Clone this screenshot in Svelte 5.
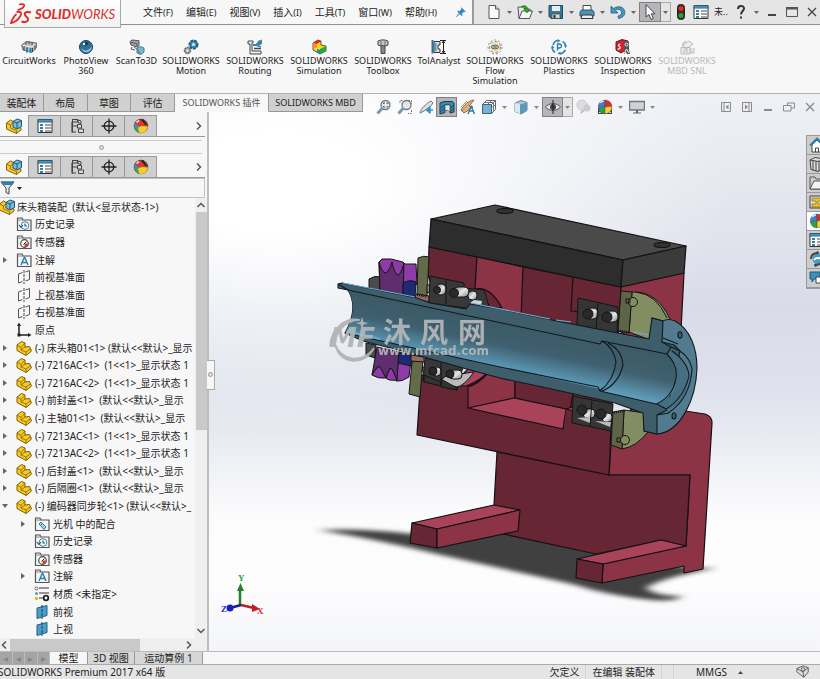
<script>
  const menus = [
    ['文件', 'F'], ['编辑', 'E'], ['视图', 'V'], ['插入', 'I'], ['工具', 'T'], ['窗口', 'W'], ['帮助', 'H']
  ];
  const quick = [
    ['new', '新建'], ['open', '打开'], ['save', '保存'], ['print', '打印'], ['undo', '撤消']
  ];
  const addins = [
    { icon: 'circuit', lines: ['CircuitWorks'], size: 'wide' },
    { icon: 'sphere', lines: ['PhotoView', '360'], size: 'mid' },
    { icon: 'scan', lines: ['ScanTo3D'], size: 'narrow' },
    { icon: 'motion', lines: ['SOLIDWORKS', 'Motion'] },
    { icon: 'routing', lines: ['SOLIDWORKS', 'Routing'] },
    { icon: 'simulation', lines: ['SOLIDWORKS', 'Simulation'] },
    { icon: 'bolt', lines: ['SOLIDWORKS', 'Toolbox'] },
    { icon: 'tol', lines: ['TolAnalyst'], size: 'short' },
    { icon: 'flow', lines: ['SOLIDWORKS', 'Flow', 'Simulation'] },
    { icon: 'plastics', lines: ['SOLIDWORKS', 'Plastics'] },
    { icon: 'inspection', lines: ['SOLIDWORKS', 'Inspection'] },
    { icon: 'mbd', lines: ['SOLIDWORKS', 'MBD SNL'], off: true }
  ];
  const tabs = ['装配体', '布局', '草图', '评估', 'SOLIDWORKS 插件', 'SOLIDWORKS MBD'];
  const managers = [
    ['assembly', '设计树'], ['props', '属性'], ['config', '配置'], ['target', '尺寸'], ['ball', '外观']
  ];
  const tree = [
    { icon: 'assembly', text: '床头箱装配  (默认<显示状态-1>)', level: 0 },
    { icon: 'history', text: '历史记录', level: 1 },
    { icon: 'sensor', text: '传感器', level: 1 },
    { icon: 'note', text: '注解', level: 1, arrow: 'right' },
    { icon: 'plane', text: '前视基准面', level: 1 },
    { icon: 'plane', text: '上视基准面', level: 1 },
    { icon: 'plane', text: '右视基准面', level: 1 },
    { icon: 'origin', text: '原点', level: 1 },
    { icon: 'part', text: '(-) 床头箱01<1> (默认<<默认>_显示', level: 1, arrow: 'right' },
    { icon: 'part', text: '(-) 7216AC<1>  (1<<1>_显示状态 1', level: 1, arrow: 'right' },
    { icon: 'part', text: '(-) 7216AC<2>  (1<<1>_显示状态 1', level: 1, arrow: 'right' },
    { icon: 'part', text: '(-) 前封盖<1>  (默认<<默认>_显示', level: 1, arrow: 'right' },
    { icon: 'part', text: '(-) 主轴01<1>  (默认<<默认>_显示', level: 1, arrow: 'right' },
    { icon: 'part', text: '(-) 7213AC<1>  (1<<1>_显示状态 1', level: 1, arrow: 'right' },
    { icon: 'part', text: '(-) 7213AC<2>  (1<<1>_显示状态 1', level: 1, arrow: 'right' },
    { icon: 'part', text: '(-) 后封盖<1>  (默认<<默认>_显示', level: 1, arrow: 'right' },
    { icon: 'part', text: '(-) 后隔圈<1>  (默认<<默认>_显示', level: 1, arrow: 'right' },
    { icon: 'part', text: '(-) 编码器同步轮<1> (默认<<默认>_', level: 1, arrow: 'down' },
    { icon: 'mates', text: '光机 中的配合', level: 2, arrow: 'right' },
    { icon: 'history', text: '历史记录', level: 2 },
    { icon: 'sensor', text: '传感器', level: 2 },
    { icon: 'note', text: '注解', level: 2, arrow: 'right' },
    { icon: 'material', text: '材质 <未指定>', level: 2 },
    { icon: 'planeblue', text: '前视', level: 2 },
    { icon: 'planeblue', text: '上视', level: 2 }
  ];
  const pane = [
    ['home', '资源'], ['library', '设计库'], ['folder', '文件探索器'], ['palette', '视图调色板'],
    ['ball', '外观'], ['props', '自定义属性'], ['refresh', '刷新'], ['forum', '论坛']
  ];
</script>

{#snippet caret()}
  <svg class="caret" viewBox="0 0 5 3" aria-hidden="true"><path d="M0 0h5L2.500 3z" fill="currentColor" /></svg>
{/snippet}

{#snippet chevron(turn)}
  <svg class="chev {turn}" viewBox="0 0 8 8" aria-hidden="true"><path d="M2 0.500 5.500 4 2 7.500" fill="none" stroke="#555" stroke-width="1.500" /></svg>
{/snippet}

{#snippet icon(name)}
  <svg class="icon" viewBox="0 0 16 16" fill="none" stroke-linejoin="round" aria-hidden="true">
    {#if name === 'new'}
      <path d="M3 1.500h6.500L13 5v9.500H3z" fill="#fbfbfb" stroke="#555" /><path d="M9.500 1.500V5H13" stroke="#555" fill="#ddd" />
    {:else if name === 'open'}
      <path d="M1 3h5l1 1.500h4V7h4l-3 7.500H2z" fill="#e8e8e8" stroke="#555" /><path d="M2 14.500 5 7h10.500l-3 7.500z" fill="#f6f6f6" stroke="#555" /><path d="M4 3c3-2.500 6-1.500 7 2h2.500L10 9 6.800 5H9C8 3 6.500 2.500 4 3z" fill="#35a524" stroke="#1c6e13" stroke-width=".5" />
    {:else if name === 'save'}
      <path d="M1 1.500h13.500v13H3l-2-2z" fill="#38789c" stroke="#1d4963" /><path d="M4 2h8v5H4z" fill="#e8edf0" /><path d="M4 10h8v4.500H4z" fill="#d4d4d4" stroke="#333" stroke-width=".6" /><path d="M5.500 11h2v3h-2z" fill="#333" />
    {:else if name === 'print'}
      <path d="M4 1.500h8V7H4z" fill="#fff" stroke="#444" /><path d="M2.500 6h11L15 8v4H1V8z" fill="#4d93b8" stroke="#245872" /><path d="M3 11h10l1 3.500H2z" fill="#eee" stroke="#333" />
    {:else if name === 'undo'}
      <path d="M1 2v7h7L5.500 6.500C8 4.500 11.500 5.500 11.500 8.500c0 2-1.500 3-3.500 3.500l.5 2.500C12 14 14.800 12 14.800 8.500 14.800 3 8.500 1 3.500 4.500z" fill="#4a93bd" stroke="#1f5e83" stroke-width=".8" />
    {:else if name === 'cursor'}
      <path d="M4 0.500v12.500l3-2.500 2 5 2.300-1-2-4.700H13z" fill="#fff" stroke="#444" />
    {:else if name === 'traffic'}
      <rect x="4.500" y=".5" width="7" height="15" rx="3" fill="#3b2b22" stroke="#222" /><circle cx="8" cy="4.500" r="2.500" fill="#ec2a1d" /><circle cx="8" cy="11.500" r="2.500" fill="#25a33c" />
    {:else if name === 'props'}
      <path d="M1 1.500h14v13H1z" fill="#fff" stroke="#333" /><path d="M1 1.500h14v2.700H1z" fill="#4b93b5" stroke="#245872" stroke-width=".6" /><path d="M3 6h3v2H3zM3 9h3v2H3zM3 12h3v2H3z" fill="#387fa6" /><path d="M8 7h6M8 10h6M8 13h6" stroke="#444" />
    {:else if name === 'help'}
      <path d="M5 5c0-4 6-4 6-.5C11 7 8 7 8 10.500" stroke="#333" stroke-width="2" /><path d="M7 12.500h2v2H7z" fill="#333" />
    {:else if name === 'min'}
      <path d="M4 10h8v2H4z" fill="currentColor" />
    {:else if name === 'max'}
      <path d="M2.500 3.500h11v9h-11z" stroke="#555" /><path d="M2 3h12v2.500H2z" fill="#555" />
    {:else if name === 'close'}
      <path d="m4 4 8 8m0-8-8 8" stroke="currentColor" stroke-width="1.300" />
    {:else if name === 'restore'}
      <path d="M6.500 6V4h7v5H10M2.500 6.500h7.500V12H2.500z" stroke="currentColor" />
    {:else if name === 'paneleft'}
      <path d="M3.500 3.500h9v9h-9zM6 3.500v9" stroke="currentColor" /><path d="M10.500 5.500v5L7.500 8z" fill="currentColor" />
    {:else if name === 'paneright'}
      <path d="M3.500 3.500h9v9h-9zM10 3.500v9" stroke="currentColor" /><path d="M6 5.500v5L9 8z" fill="currentColor" />
    {:else if name === 'pin'}
      <path d="m8.500 3 4.500 4.500-2 .3-2 2 .2 2.700-2.400-2.400L2.500 13.500 6 9.300 3.700 7l2.700.1 2-2z" fill="#2e86c1" stroke="#2e86c1" stroke-width=".6" />
    {:else if name === 'circuit'}
      <path d="m.5 6 5-3.500 10 1.500v4.500l-4 4.500L2 11z" fill="#b7bcbf" stroke="#555" stroke-width=".8" /><path d="m2 6.500 9 1.500 3-3" stroke="#eee" /><path d="M6 8.500v5M9.500 9v5" stroke="#2d7fae" stroke-width="2" /><path d="M5 2.500v3M8 2v3M11 3v3M3 7v4.500M11.500 9v4M14 6.500v4" stroke="#444" />
    {:else if name === 'sphere'}
      <circle cx="8" cy="8" r="6.500" fill="#2f7297" stroke="#163f57" /><path d="M3 9c3 4 8 3 11-2-.5 7-8.500 9-11 2z" fill="#8cc3de" /><path d="M4 6c1-3 5-4 7-2-2 3-5 4-7 2z" fill="#173c52" /><circle cx="6" cy="5" r="1.200" fill="#fff" />
    {:else if name === 'scan'}
      <path d="m1 2.500 2-1.500 7 .7v4.800L8 8 2 6z" fill="#a3a7aa" stroke="#555" /><path d="m2 3.500 6 1v3M3 8l-1 2 4 1" stroke="#555" /><path d="m8 9 3.500-1.500L15 9v4l-3 2.500L8 14z" fill="#7db6d0" stroke="#477e98" /><path d="m5 8 4 3 2 4" stroke="#666" />
    {:else if name === 'motion'}
      <circle cx="10.500" cy="5.500" r="4" fill="#418cb4" stroke="#245f80" stroke-width="2" stroke-dasharray="3 .8" /><circle cx="10.500" cy="5.500" r="1.500" fill="#dcecf4" /><circle cx="4.500" cy="11.500" r="3" fill="#aaa" stroke="#666" stroke-width="1.500" stroke-dasharray="2 .6" /><circle cx="4.500" cy="11.500" r="1" fill="#fff" />
    {:else if name === 'routing'}
      <path d="M1 2h5v2H5v8h9v3H3V5H1z" fill="#eee" stroke="#444" /><path d="M7 9.500h7" stroke="#444" stroke-width="1.500" /><path d="m11 2 4-1.500V5l-4 2z" fill="#3984ab" /><path d="M6 6h3l4-4M9 6l5 2" stroke="#3984ab" stroke-width="1.800" />
    {:else if name === 'simulation'}
      <path d="m2 4 5-3 3 1v4l5 1v5l-6 3-7-4z" fill="#f6d51f" stroke="#333" stroke-width=".8" /><path d="m2 4 5-3 3 1-4 3z" fill="#e8201a" /><path d="m2 4 4 2v3L2 8z" fill="#f18a1c" /><path d="m9 10 6-3v5l-6 3z" fill="#27a745" /><path d="m6 10 3 1v4l-3-2z" fill="#1b86c8" />
    {:else if name === 'bolt'}
      <path d="M3 2c3-1.500 7-1.500 10 0v4l-3 1H6L3 6z" fill="#c6c6c6" stroke="#444" /><path d="M6 7h4v7.500H6z" fill="#aaa" stroke="#444" /><path d="M6 9h4M6 11h4M6 13h4M6 2v4M10 2v4" stroke="#555" stroke-width=".8" />
    {:else if name === 'tol'}
      <path d="M1.500 1v13.500" stroke="#286f96" stroke-width="2" /><path d="M3 2.500h6V6H7v4h2v3.500H3z" fill="#ddd" stroke="#333" /><path d="M3.500 4v8h2V4z" fill="#4e9bc3" /><path d="M9 1.500h6M9 14.500h6M12.500 2v12M11 4l1.500-2L14 4M11 12l1.500 2 1.500-2" stroke="#222" />
    {:else if name === 'flow'}
      <circle cx="8" cy="8" r="7" stroke="#35a8e0" stroke-dasharray="2 2" /><circle cx="8" cy="8" r="5.500" stroke="#ef5b28" stroke-dasharray="3 2" /><circle cx="8" cy="8" r="4" stroke="#e3d73b" stroke-dasharray="3 1" /><ellipse cx="8" cy="8" rx="3.500" ry="2" fill="#ccc" stroke="#555" /><path d="M6.500 8h3" stroke="#555" />
    {:else if name === 'plastics'}
      <path d="M2 6C3 3 5 1.500 7 1.500M11.500 2.500C13.500 3.500 14.500 5 14.800 7M14.500 11c-1.500 2.500-3.500 3.500-5.500 3.700M4 13.500C2 12 1.200 10.500 1.200 8.500" stroke="#3387b5" stroke-width="1.600" /><path d="m6.500 0 3 1.800-3 2zM13 6l3 .5-1.500 3zM9.500 12.500v3.500L6.500 14.500zM0 9.500l1-3.500 2.500 3z" fill="#3387b5" /><path d="M6.500 11.500V5h2q2 .3 2 2t-2 2h-2" stroke="#2677a3" stroke-width="1.300" />
    {:else if name === 'inspection'}
      <path d="m1 3 6-2.500 6 1.500v8l-7 4-5-3z" fill="#c92531" stroke="#701820" /><path d="M5.500 5C3 5 3 7 4.500 7.500S5 10.500 2.500 10" stroke="#fff" stroke-width="1.200" /><path d="M9 3h5v8l1 4h-3l-1-2-2 2z" fill="#555" /><circle cx="11.500" cy="5.500" r="1.500" stroke="#eee" /><path d="m9.500 14 2-4 2.500 4" stroke="#eee" />
    {:else if name === 'mbd'}
      <path d="m3 6 7-4 4 3-7 5zM4 7V4l3-2M2 8.500h9V15H2zM12 9v5h3V9" fill="#ececec" stroke="#bbb" /><path d="M4 11h5M4 13h5" stroke="#bbb" />
    {:else if name === 'zoomfit' || name === 'zoomarea'}
      {#if name === 'zoomarea'}<path d="M3 4V1.500h3M11 1.500h3.500V5M14.500 11v3.500H11" stroke="#777" stroke-dasharray="2 1" />{/if}
      <circle cx="9.500" cy="6" r="4.500" fill="#dfe8ed" stroke="#777" stroke-width="1.300" /><path d="m1.500 14.500 4.500-5" stroke="#6d9cb6" stroke-width="3" />
      {#if name === 'zoomfit'}<path d="M7.500 5V4H9M10.500 4H12v1M12 7v1h-1.500M9 8H7.500V7" stroke="#555" />{/if}
    {:else if name === 'previous'}
      <path d="M2 14c0-4 7-10 11-12l2 2c-2 4-7 6-9 8z" fill="#dce0e3" stroke="#777" /><path d="m15 11H9m3-3-3.500 3 3.500 3z" fill="#3b92c2" stroke="#3b92c2" stroke-width="1.500" />
    {:else if name === 'section'}
      <path d="m1 4 4-1.500h8l2 1.500v9l-4 1V6H6v7.500L1 15z" fill="#358bb5" stroke="#173f55" /><path d="M6 6h5v7l-2-1.500H6z" fill="#e4e4e4" stroke="#444" stroke-width=".6" /><path d="m2 9 3.500-3M2 12.500 5.500 9M11.500 9 15 6m-3.500 6.500L15 9" stroke="#173f55" />
    {:else if name === 'annotate'}
      <path d="M1 11C4 6 8 2 14 1L9 7l4 1-9 6z" fill="#e9b06b" stroke="#8b6a40" /><path d="m2 12 7-7M1 8l6-6" stroke="#999" /><path d="m8 15 3.200-8 3.200 8m-5.200-3h4" stroke="#2d7ba8" stroke-width="1.400" />
    {:else if name === 'orient'}
      <path d="M1.500 5.500h9v9h-9z" fill="#79b1ce" stroke="#336985" /><path d="m1.500 5.500 4-4h9v9l-4 4M10.500 5.500l4-4" stroke="#666" /><path d="M10 9l4-3M7 5l3-3M4 3.500h9M12.500 4v9" stroke="#777" />
    {:else if name === 'display'}
      <path d="m2 4 6-2.500 6 2v8L8 15l-6-2.500z" fill="#a5cadc" stroke="#6b8490" /><path d="m2 4 5 1.500V15l-5-2.500z" fill="#d9e9f1" /><path d="m7 5.500 7-2v8L7 15z" fill="#5a9bbb" />
    {:else if name === 'eye'}
      <path d="M0.500 8C4 3.500 12 3.500 15.500 8 12 12.500 4 12.500 .5 8z" fill="#e4e4e4" stroke="#555" /><circle cx="8" cy="8" r="3" fill="#444" /><path d="M8 1v14" stroke="#222" />
    {:else if name === 'ghost'}
      <circle cx="6" cy="6" r="5" fill="#ddd" stroke="#ccc" /><circle cx="11" cy="9" r="3.500" fill="#ccc" /><path d="m4 13 5-4 1 2-5 4z" fill="#c4c4c4" />
    {:else if name === 'ball' || name === 'scene'}
      {#if name === 'scene'}<path d="M1 9h14v6H1z" fill="#444" /><path d="M2 10h2v2H2zM2 13h2v1H2zM12 10h2v2h-2zM12 13h2v1h-2z" fill="#ddd" />{/if}
      <g stroke="#444" stroke-width=".4"><path d="M8 8V1a6.800 6.800 0 0 0-6.600 8z" fill="#3d7fd0" /><path d="M8 8V1a6.800 6.800 0 0 1 7 6.500z" fill="#dd2d27" /><path d="m8 8-6.600 1A6.800 6.800 0 0 0 8 14.800z" fill="#2ba343" /><path d="m8 8 7-.5A6.800 6.800 0 0 1 8 14.800z" fill="#f2d132" /></g><path d="M3.500 4c1-1.500 2.500-2 3.500-2" stroke="#fff" stroke-width="1.200" />
    {:else if name === 'appearance'}
      <circle cx="8" cy="8" r="6.800" fill="#dd3a2c" stroke="#333" stroke-width=".8" /><path d="M8 8C4 8 2 6 2.500 4.200A7 7 0 0 0 2 11z" fill="#4e86c9" /><path d="M1.300 7.500C4 10 6 9 8 8v6.800A6.800 6.800 0 0 1 1.300 7.500z" fill="#3aa54b" /><path d="M5 9.500 9 8l6 .5A6.800 6.800 0 0 1 6 14.500z" fill="#f1cf2c" /><path d="m8 2 2-1 4 5.500-1 1z" fill="#222" /><path d="M3.500 4.500 6 2.500" stroke="#fff" stroke-width="1.500" />
    {:else if name === 'monitor'}
      <path d="M.5 2.500h15v8.500H.5z" fill="#c9d4da" stroke="#777" stroke-width="1.400" /><path d="M7 11h2v2.500h3v1H4v-1h3z" fill="#666" />
    {:else if name === 'config'}
      <path d="M3 1.500h5.500V4H3v10h4M3 8h5" stroke="#444" stroke-width="1.200" /><path d="M3.500 1.500v13M8.500 6.500h4v3.500h-4zM9.500 11h5v3.500h-5zM9 2l3 1v2.500l-3-1z" fill="#ddd" stroke="#444" />
    {:else if name === 'target'}
      <circle cx="8" cy="8" r="4.800" stroke="#222" stroke-width="1.300" /><path d="M8 .5v15M.5 8h15" stroke="#222" stroke-width="1.300" />
    {:else if name === 'assembly'}
      <path d="m.5 5 4-3L8 4v4l7 2v2l-4.500 3.500L.5 11z" fill="#f7c829" stroke="#81600b" /><path d="m.5 5 4 2V10l6 2.500v3M4.500 7 8 4" stroke="#81600b" stroke-width=".8" /><path d="m7 3.500 4-2.500 4.500 1.500V8.500L11 11 7 9z" fill="#79bbdb" stroke="#1f5876" /><path d="m7 3.500 4 1.500 4.500-2.500M11 5v6" stroke="#1f5876" />
    {:else if name === 'part'}
      <path d="m1 5 4.500-3.500L9 3v4l4.500-.5L15.500 11 10 15.500 1 10.500z" fill="#fbcb22" stroke="#765b09" /><path d="m1 5 4 2.500L9 3M5 7.500V10l5 2 5-3.500M10 12v3.500M5 10l4-3" stroke="#8b6b0c" stroke-width=".9" />
    {:else if ['history', 'sensor', 'note', 'mates'].includes(name)}
      <path d="M1.500 2h4.500l1 2h8v10.500H1.500z" fill="#f4f4f4" stroke="#555" stroke-width="1.200" /><path d="M1.500 4H7" stroke="#888" />
      {#if name === 'history'}<circle cx="9" cy="9.500" r="3.800" fill="#fff" stroke="#3b7f9f" /><path d="M9 7.500v2.500h2M3 9l2 2.500L7 9" stroke="#1d5979" stroke-width="1.200" />
      {:else if name === 'sensor'}<circle cx="8.500" cy="9.500" r="3.800" fill="#fff" stroke="#444" stroke-width="1.200" /><path d="M8.500 9.500h3.500A3.500 3.500 0 0 1 8.500 13z" fill="#d43c28" /><path d="m7.500 10.500 3-3" stroke="#222" />
      {:else if name === 'note'}<path d="m5 13 3.500-8 3.500 8M6.500 10.500h4" stroke="#2a83b0" stroke-width="1.500" />
      {:else}<path d="m5 8 2-2 5 5-2 2.500zM7 9l2-2" fill="#a6cfe2" stroke="#337a9d" />{/if}
    {:else if name === 'plane'}
      <path d="M6.500 3.500l-4 1.500v9l4-1.500M9.500 3l4-1.500v9l-4 1.500" stroke="#555" /><path d="M8 1v14" stroke="#444" stroke-dasharray="3 1" />
    {:else if name === 'planeblue'}
      <path d="m3 4 10-2.500v10L3 14.500z" fill="#4b9ec7" stroke="#25617f" /><path d="M8 1v14" stroke="#163d52" stroke-dasharray="3 1" />
    {:else if name === 'origin'}
      <path d="M3 2v11h11" stroke="#222" stroke-width="1.500" /><path d="m1 4 2-3.500L5 4zM12 11l3.500 2-3.500 2zM1.500 11.500h3v3h-3z" fill="#222" />
    {:else if name === 'material'}
      <path d="M5 2h10M5 7h10M5 12h4" stroke="#333" stroke-width="1.200" /><circle cx="2.500" cy="2.500" r="1.500" fill="#fff" stroke="#666" /><circle cx="2.500" cy="7.500" r="1.500" fill="#4f9cc5" /><circle cx="2.500" cy="12.500" r="1.700" fill="#e8b51f" /><circle cx="12" cy="12" r="2.300" stroke="#222" stroke-width="1.800" />
    {:else if name === 'filter'}
      <path d="M1 2h13L9 8v6l-3-1.500V8z" fill="#e3e9ec" stroke="#444" /><path d="M1 1.500h13L12 5H3z" fill="#2f81aa" />
    {:else if name === 'home'}
      <path d="M3 8v7h10V8L8 3z" fill="#fff" stroke="#444" /><path d="M6.500 15v-4h3v4" stroke="#444" /><path d="M1 8.500 8 1.500l7 7" stroke="#2f83ac" stroke-width="2" />
    {:else if name === 'library'}
      <path d="m1 4 5-2.500L15 3v9l-6 3.500-7-2z" fill="#ddd" stroke="#444" /><path d="M4 5v9M7 5v10M10 5v10M1 4l8 1.500L15 3" stroke="#444" />
    {:else if name === 'folder'}
      <path d="M1 2h5l1 2h8v10H1z" fill="#ccc" stroke="#555" /><path d="m1 14 4-8h11v8z" fill="#f4f4f4" stroke="#555" />
    {:else if name === 'palette'}
      <path d="M1 2h14v12H1z" fill="#ddd" stroke="#444" /><path d="M3 4h10v3H9v3h4v3H3v-3h4V7H3z" fill="#efc12c" stroke="#7a5b0a" stroke-width=".6" />
    {:else if name === 'refresh'}
      <circle cx="9" cy="8" r="5.500" fill="#479ac5" /><path d="M2 8c0-4 3-6 7-6l-1-1.500M14 8c0 4-4 6-8 6l1.500 1.500" stroke="#444" stroke-width="2" /><path d="M5 9c3-4 6 0 9-3" stroke="#fff" stroke-width="2" />
    {:else if name === 'forum'}
      <path d="M1 2h10v7H5l-2 3V9H1z" fill="#3a91bd" stroke="#1d5979" /><path d="M7 7h8v6h-1v2l-2-2H7z" fill="#fff" stroke="#444" />
    {:else if name === 'tag'}
      <path d="m1 4 7-3 6 2v5l-5 6-8-6z" fill="#ddd" stroke="#555" /><path d="m1 4 7 4 6-5M8 8l1 6" stroke="#555" /><circle cx="8" cy="5" r="2" stroke="#555" />
    {/if}
  </svg>
{/snippet}

{#snippet managerTabs()}
  <div class="mgr">
    {#each managers as [name, label], i}
      <button class:current={i === 0} aria-label={label}>{@render icon(name === 'ball' ? 'appearance' : name)}</button>
    {/each}
    <button class="more" aria-label="更多">{@render chevron('')}</button>
  </div>
{/snippet}

<div class="app">
  <header class="title">
    <div class="brand">
      <svg class="ds" viewBox="0 0 22 22" fill="none" stroke="#d9302c" aria-hidden="true">
        <path d="M9 1.500c4-1 6 0 5 1.800C13 5 10 6.500 7.500 7" stroke-width="1.700" />
        <path d="M6.500 9c5-1 5.500 1.500 3.500 4.500C8 17 4 20 1 20c1-3 3-7 5.500-9" stroke-width="1.800" />
        <path d="M21 9.500c-4-1.500-7 0-6 2.500 1 2 3.500 2.500 3 5-.4 2-3.500 2.500-6.500 1.500" stroke-width="2" />
      </svg>
      <span class="word"><b>SOLID</b>WORKS</span>
    </div>
    <nav class="menus">
      {#each menus as [name, key]}
        <button>{name}<small>({key})</small></button>
      {/each}
      <button class="pin" aria-label="固定">{@render icon('pin')}</button>
    </nav>
    <div class="quick">
      {#each quick as [name, label]}
        <button class="tool" aria-label={label}>{@render icon(name)}</button>
        <button class="drop" aria-label="{label}选项">{@render caret()}</button>
      {/each}
      <button class="tool pressed" aria-label="选择">{@render icon('cursor')}</button>
      <button class="drop framed" aria-label="选择选项">{@render caret()}</button>
      <button class="tool" aria-label="重建">{@render icon('traffic')}</button>
      <button class="tool" aria-label="选项">{@render icon('props')}</button>
      <button class="tool text">未..</button>
      <button class="tool" aria-label="帮助">{@render icon('help')}</button>
      <button class="drop" aria-label="帮助选项">{@render caret()}</button>
      <button class="tool" aria-label="最小化">{@render icon('min')}</button>
      <button class="tool" aria-label="最大化">{@render icon('max')}</button>
      <button class="tool" aria-label="关闭">{@render icon('close')}</button>
    </div>
  </header>

  <div class="ribbon">
    {#each addins as a}
      <button class="addin {a.size ?? ''}" disabled={a.off}>
        {@render icon(a.icon)}
        {#each a.lines as line}<span>{line}</span>{/each}
      </button>
    {/each}
  </div>

  <div class="workspace">
    <div class="tabrow">
      <div class="tabs">
        {#each tabs as t, i}
          <button class:current={i === 4} class:latin={i > 3}>{t}</button>
        {/each}
      </div>
      <div class="hud">
        <button class="tool" aria-label="整屏显示全图">{@render icon('zoomfit')}</button>
        <button class="tool" aria-label="局部放大">{@render icon('zoomarea')}</button>
        <button class="tool" aria-label="上一视图">{@render icon('previous')}</button>
        <button class="tool pressed" aria-label="剖面视图">{@render icon('section')}</button>
        <button class="tool" aria-label="动态注解">{@render icon('annotate')}</button>
        <button class="tool" aria-label="视图定向">{@render icon('orient')}</button>
        <button class="drop" aria-label="定向选项">{@render caret()}</button>
        <button class="tool" aria-label="显示样式">{@render icon('display')}</button>
        <button class="drop" aria-label="样式选项">{@render caret()}</button>
        <button class="tool pressed" aria-label="隐藏项目">{@render icon('eye')}</button>
        <button class="drop framed" aria-label="隐藏选项">{@render caret()}</button>
        <button class="tool" aria-label="编辑外观">{@render icon('ghost')}</button>
        <button class="tool" aria-label="应用布景">{@render icon('scene')}</button>
        <button class="drop" aria-label="布景选项">{@render caret()}</button>
        <button class="tool" aria-label="视图设定">{@render icon('monitor')}</button>
        <button class="drop" aria-label="视图选项">{@render caret()}</button>
        <div class="docwin">
          {#each [['paneleft', '左展开'], ['paneright', '右展开'], ['min', '最小化'], ['restore', '还原'], ['close', '关闭']] as [n, l]}
            <button class="tool" aria-label={l}>{@render icon(n)}</button>
          {/each}
        </div>
      </div>
    </div>

    <div class="body">
      <aside class="panel">
        {@render managerTabs()}
        <div class="splitter"><i></i></div>
        {@render managerTabs()}
        <button class="filter" aria-label="筛选">{@render icon('filter')}{@render caret()}</button>
        <div class="treebox">
          <ul class="tree">
            {#each tree as n}
              <li class="l{n.level}">
                <span class="tw">
                  {#if n.arrow}<svg class="twist {n.arrow}" viewBox="0 0 6 6" aria-hidden="true"><path d="M1 0l4 3-4 3z" fill="#666" /></svg>{/if}
                </span>
                {@render icon(n.icon)}
                <span class="label">{n.text}</span>
              </li>
            {/each}
          </ul>
          <div class="vbar">{@render chevron('up')}<div class="track"><div class="thumb"></div></div>{@render chevron('down')}</div>
        </div>
        <div class="hbar">{@render chevron('left')}<div class="track"><div class="thumb"></div></div>{@render chevron('')}</div>
      </aside>

      <main class="view">
        <button class="handle" aria-label="折叠面板"><i></i></button>
        <svg class="scene" viewBox="209 112 611 539" role="img" aria-label="床头箱装配">
          <defs>
            <linearGradient id="bore" gradientUnits="userSpaceOnUse" x1="500" y1="322" x2="491" y2="366">
              <stop offset="0" stop-color="#3c5966" /><stop offset=".5" stop-color="#3f6070" /><stop offset="1" stop-color="#5c9ab8" />
            </linearGradient>
            <linearGradient id="bore2" gradientUnits="userSpaceOnUse" x1="645" y1="350" x2="634" y2="400">
              <stop offset="0" stop-color="#3c5966" /><stop offset=".5" stop-color="#40616f" /><stop offset="1" stop-color="#64a5c4" />
            </linearGradient>
            <linearGradient id="steel" x1="0" y1="0" x2="1" y2="1">
              <stop offset="0" stop-color="#777" /><stop offset=".5" stop-color="#e5e7ea" /><stop offset="1" stop-color="#888" />
            </linearGradient>
            <filter id="soft" x="-10%" y="-30%" width="120%" height="160%"><feGaussianBlur stdDeviation="5 2" /></filter>
          </defs>

          <path filter="url(#soft)" fill="#404040" d="M318 530Q366 528 412 534L510 526 600 548 690 568 716 568Q660 578 646 588 656 596 682 596 676 602 652 600 610 596 572 584L437 554Q370 538 318 530Z" />

          <g stroke="#151015" stroke-width="1.200" stroke-linejoin="round">
            <g fill="#8d3346">
              <path d="M620 287 684 273 681 330 640 345 618 330Z" />
              <path d="M609 475 612 430 640 400 685 411 705 414Q712 416 712 423L703 569 684 573V566L602 583 603 564 686 546 690 475Z" />
            </g>
            <path fill="#672634" d="M497 452 609 475 690 475 686 546 661 540 596 554 503 534 494 505Z" />
            <path fill="#672634" d="M429 247 477 256 523 267 573 277 621 287 618 340 440 310 428 275Z" />
            <path fill="#8d3346" d="M477 256 523 267 521 318 470 308 475 289Z" />
            <path fill="#672634" d="M476 289Q490 286 502 308L488 308Q484 296 476 289Z" />
            <path fill="none" d="M573 277 571 311 584 312" />
            <path fill="#672634" d="M421 375 417 435 609 475 612 400 515 378Z" />
            <path fill="#8d3346" d="M468 387Q478 384 487 374L515 379V399L468 408Z" />
            <path fill="#a94359" d="M457 386 466 386Q478 382 487 373L470 367 455 382Z" />
            <path fill="#672634" d="M515 380 573 393 570 410 515 398Z" />
            <path fill="#a94359" d="M468 408 514 398 566 409 563 429Z" />
            <path fill="#672634" stroke="none" d="M566 409 578 406 573 423 564 428Z" /><path fill="#a94359" d="M566 409 579 405 574 411Z" />
            <path fill="#4a4a4a" d="M431 219 495 205 686 246 623 260Z" />
            <path fill="#2d2d2d" d="M431 219 623 260 621 287 429 247Z" />
            <path fill="#3b3b3b" d="M623 260 686 246 684 273 621 287Z" />
            <ellipse cx="505" cy="211" rx="8" ry="2.500" fill="#333" /><ellipse cx="662" cy="245" rx="8" ry="2.500" fill="#333" />

            <path fill="#a94359" d="M412 523 494 505 520 510 437 529Z" />
            <path fill="#672634" d="M412 523 437 529 437 548 410 543Z" />
            <path fill="#8d3346" d="M437 529 520 510 518 531 437 548Z" />
            <path fill="#a94359" d="M577 559 661 540 686 546 603 564Z" />
            <path fill="#672634" d="M577 559 603 564 602 583 576 578Z" />
          </g>

          <g stroke="#151515" stroke-linejoin="round">
            <path fill="#4b4b4b" d="M369 279Q375 275 381 277V292L369 289ZM366 343 376 345 375 358 366 355Z" />
            <path fill="#8e3ba8" d="M379 262 382 259 391 259 403 262 405 264 416 264 417 284 403 296 380 291Z" />
            <path fill="#5f2e70" d="M379 262Q382 273 386 273 389 272 392 262 395 275 398 275 401 274 404 263L403 296 380 291Z" />
            <path fill="#8e3ba8" d="M399 352 411 360 409 377Q402 382 396 381Z" />
            <path fill="#5f2e70" d="M377 347 399 352 397 380 390 368 386 378 378 366 372 375Z" />
            <path fill="#8e3ba8" d="M372 375Q378 365 380 367L386 378Q378 379 372 375ZM386 378Q390 366 392 369L397 380Q388 381 386 378Z" />
            <path fill="#1f2a74" d="M403 283Q410 279 416 282L415 298 403 295ZM399 352 412 355 411 366 398 363Z" />
            <path fill="#646b4a" d="M418 258Q424 255 429 257L427 296 417 294ZM412 362 423 360 420 397 409 394Z" />
            <path fill="#838d62" d="M427 285 435 285 435 291 427 293ZM423 367 430 369 427 374 422 371Z" />
            <path fill="#9a6862" d="M416 294 429 296V302L415 299ZM411 355 424 357V362L411 361Z" />
            <path fill="#383838" d="M430 276 464 283 464 288 484 290 489 306 466 308 429 303ZM425 358 463 367 461 374 457 390 423 381Z" />
            <path fill="#b8babb" d="M446 376 474 372Q464 386 457 387L438 382Z" />
            <path fill="#333" d="M424 375 441 382 441 386 424 382ZM441 379 457 388 457 390 441 387Z" />
            <g fill="url(#steel)"><rect x="436" y="284" width="10" height="11" rx="5" /><rect x="453" y="287" width="16" height="10" rx="5" /><rect x="468" y="291" width="9" height="9" rx="4" /><rect x="432" y="367" width="9" height="9" rx="4" /><rect x="449" y="370" width="13" height="9" rx="4" /></g>
            <path fill="#d2d5d8" stroke="none" d="M474 300 482 301 481 305 470 303Z" />
            <g fill="#292929"><circle cx="437" cy="290" r="3.500" /><circle cx="454" cy="293" r="4.500" /><circle cx="433" cy="371" r="4" /><circle cx="450" cy="374" r="4" /></g>
            <path fill="none" d="M446 279 446 304M441 363V385" />
            <path fill="#353535" d="M578 298 618 307 617 334 577 325ZM573 396 613 404 611 431 572 423Z" />
            <g fill="url(#steel)"><rect x="586" y="308" width="12" height="11" rx="5" /><rect x="605" y="311" width="13" height="11" rx="5" /><rect x="583" y="409" width="12" height="9" rx="4" /><rect x="602" y="413" width="10" height="9" rx="4" /></g>
            <path fill="#b8babb" stroke="none" d="M577 418 590 417 590 423ZM595 421 611 422 610 427Z" />
            <g fill="#292929"><circle cx="588" cy="314" r="5" /><circle cx="607" cy="317" r="5" /><circle cx="582" cy="410" r="5" /><circle cx="601" cy="414" r="5" /></g>
            <path fill="none" d="M598 303 596 330M592 400 590 427" />
            <path fill="#838d62" d="M632 292Q657 291 670 319L650 340 629 332ZM624 410 645 413 648 432Q636 447 622 449Z" />
            <path fill="#5e6546" d="M621 291 632 292 629 333 618 331ZM613 412 624 410 622 449 611 445Z" />
            <circle cx="633" cy="302" r="4.500" fill="#838d62" /><path fill="none" d="M626 299h4v4h-4zM617 438h4v4h-4zM636 292Q656 294 667 318" /><circle cx="625" cy="440" r="4.500" fill="#838d62" />
            <path fill="none" stroke-width="1.500" stroke-dasharray="1 1" d="M618 330 629 332M614 413 625 411M417 295 427 297" />
          </g>

          <g stroke="#10191d" stroke-width="1.100" stroke-linejoin="round">
            <path fill="#527b90" d="M652 318 663 321Q668 318 675 321C690 329 697 348 697 368 696 399 681 432 657 434L644 431Z" />
            <path fill="#3f5e6c" d="M338 284 342 283 417 298 430 303 466 309 470 304 500 309 552 320 577 325 618 333 649 339 652 318 663 321 662 342 674 345 680 351 667 410 657 415V434L644 431 643 413 615 403 547 388 500 378 463 368 410 353 363 341 345 333Q359 308 348 290L338 288Z" />
            <path fill="url(#bore)" stroke="none" d="M348 290 600 344 622 356 618 378 600 389 345 333Q359 308 348 290Z" />
            <path fill="url(#bore2)" stroke="none" d="M602 341 667 354Q678 362 676 382 672 400 656 404L600 391Q617 378 616 362 614 350 602 341Z" />
            <path fill="#467082" stroke="none" d="M667 354 671 351Q689 363 688 382 684 402 668 410L657 404Q674 400 676 382 676 363 667 354Z" />
            <path fill="none" d="M338 284 348 290 600 344 602 341 667 354Q678 365 676 378 673 397 656 404L600 391 598 387 500 367 345 333" />
            <path fill="none" d="M602 341Q614 348 616 362 614 380 600 391M608 343Q622 350 623 365 618 385 602 391" />
            <path fill="none" d="M667 354 671 347Q689 353 692 369 690 399 668 413M672 351Q688 362 689 376 684 398 666 409L657 404M663 338 678 344M662 342 671 347M657 415 669 413" />
            <ellipse cx="680" cy="335" rx="2" ry="3.200" fill="#41606f" /><ellipse cx="674" cy="416" rx="2" ry="3" fill="#41606f" />
            <path fill="none" stroke="#6eb1d2" d="M343 283 415 297M471 303 550 319M556 320 571 322M633 332 648 335" />
            <path fill="none" stroke="#6aabc9" stroke-width="2" d="M347 331 380 339" />
          </g>

          <g fill="#b2b5b7" class="mark">
            <path d="M330 346C331 328 346 316 360 320 346 320 335 332 334 346ZM335 344C342 361 362 364 374 348 366 366 339 366 335 344Z" stroke="#b2b5b7" stroke-width="1.500" />
            <path d="m362 317 1.500 5 5 1-5 1.500-1.500 5-1.500-5-5-1.500 5-1z" />
            <text class="mf" x="330" y="347">MF</text>
            <text class="cn" x="383" y="343">沐</text><text class="cn" x="420" y="343">风</text><text class="cn" x="458" y="343">网</text>
            <text class="url" x="378" y="355">www.mfcad.com</text>
          </g>

          <g stroke-width="2.500">
            <path d="M240 605V588" stroke="#24802a" /><path d="m237 591 3.500-8 3.500 8z" fill="#24802a" />
            <path d="m241 605 13 3" stroke="#c01e1e" /><path d="m252 604 8 5-8 3z" fill="#c01e1e" />
            <path d="m241 605-11 3" stroke="#1a1f8e" /><circle cx="230" cy="608" r="3.500" fill="#1a1fb5" />
          </g>
          <g class="axes"><text x="238" y="581" fill="#35a035">Y</text><text x="221" y="612" fill="#2929e0">Z</text><text x="257" y="614" fill="#e02929">X</text></g>
        </svg>
        <div class="pane">
          {#each pane as [n, l], i}
            <button class:current={i === 4} aria-label={l}>{@render icon(n)}</button>
          {/each}
        </div>
      </main>
    </div>
  </div>

  <div class="sheets">
    <div class="nav">
      {#each ['◂', '◂', '▸', '▸'] as g}<button aria-label="翻页">{g}</button>{/each}
    </div>
    <button class="sheet current">模型</button>
    <button class="sheet">3D 视图</button>
    <button class="sheet">运动算例 1</button>
  </div>

  <footer class="status">
    <span class="product">SOLIDWORKS Premium 2017 x64 版</span>
    <span class="cell">欠定义</span>
    <span class="cell">在编辑 装配体</span>
    <span class="cell blank"></span>
    <button class="units">MMGS <svg class="caret" viewBox="0 0 5 3" aria-hidden="true"><path d="M0 3h5L2.500 0z" fill="#444" /></svg></button>
    <button class="tagbtn" aria-label="标签">{@render icon('tag')}</button>
  </footer>
</div>

<style>
  :global(body) { margin: 0; overflow: hidden; }
  * { box-sizing: border-box; }
  .app {
    display: flex; flex-direction: column; height: 100vh; overflow: hidden;
    background: #f7f7f7; color: #222;
    font: 10px/14px "Noto Sans", "Noto Sans CJK SC", sans-serif;
  }
  button { border: 0; padding: 0; margin: 0; background: none; color: inherit; font: inherit; white-space: nowrap; }
  svg { display: block; flex: none; }
  .icon { width: 16px; height: 16px; }
  .caret { width: 5px; height: 3px; }
  .chev { width: 8px; height: 8px; }
  .chev.up { transform: rotate(-90deg); }
  .chev.down { transform: rotate(90deg); }
  .chev.left { transform: rotate(180deg); }

  .title { display: flex; flex: none; height: 25px; border-bottom: 1px solid #8f8f8f; position: relative; z-index: 2; }
  .brand {
    display: flex; align-items: center; gap: 3px; flex: none; width: 117px; height: 28px; margin-left: 4px; padding-left: 5px;
    background: linear-gradient(#fff, #f1f1f1); border: 1px solid #aaa; border-top: 0; color: #d9302c;
  }
  .ds { width: 22px; height: 22px; }
  .word { font: italic 13px/16px Lato, sans-serif; }
  .word b { font-weight: 900; }
  .menus { display: flex; align-items: center; gap: 13px; flex: none; width: 353px; padding-left: 22px; border-right: 2px solid #9a9a9a; }
  .menus small { font-size: 9px; }
  .menus .pin { margin-left: auto; margin-right: 4px; }
  .menus .icon { width: 14px; height: 14px; }
  .quick { display: flex; align-items: center; flex: 1; min-width: 0; padding-left: 10px; background: #e5e5e5; color: #444; }
  .tool { display: flex; align-items: center; justify-content: center; flex: none; width: 20px; height: 20px; }
  .quick .tool.text { color: #222; font-size: 9px; }
  .drop { display: flex; align-items: center; justify-content: center; flex: none; width: 11px; height: 20px; color: #666; }
  .quick .pressed, .hud .pressed { width: 22px; background: #b4b6b9; border: 1px solid #808080; }
  .drop.framed { width: 10px; background: #e4e4e4; border: 1px solid #aaa; border-left: 0; }

  .ribbon { display: flex; flex: none; height: 68px; padding-top: 14px; align-items: flex-start; }
  .addin { display: flex; flex-direction: column; align-items: center; width: 64px; font-size: 9px; line-height: 10px; flex: none; }
  .addin .icon { margin-bottom: 1px; }
  .addin.wide { width: 58px; }
  .addin.mid { width: 56px; }
  .addin.narrow { width: 45px; }
  .addin.short { width: 48px; }
  .addin:disabled { color: #b9b9b9; }

  .workspace {
    display: flex; flex-direction: column; flex: 1; min-height: 0;
    background:
      radial-gradient(ellipse 55% 45% at 34% 16%, #fff 20%, #fff0 100%),
      linear-gradient(#f0f1f6 0%, #d9dce8 38%, #dfe2ec 54%, #fcfcfd 76%, #fdfdfe 88%, #f4f5f9 100%);
  }
  .tabrow { display: flex; flex: none; height: 19px; border-top: 1px solid #b0b0b0; position: relative; z-index: 1; }
  .tabs { display: flex; flex: none; width: 363px; }
  .tabs button { flex: 1 1 44px; border: 1px solid #989898; border-width: 0 1px 1px 0; background: #d0d0d0; }
  .tabs .latin { flex: 0 0 94px; font-size: 9px; }
  .tabs .current { background: #f7f7f7; border-bottom-color: #f7f7f7; color: #555; }
  .hud { display: flex; flex: 1; height: 26px; align-items: center; padding-left: 10px; }
  .hud .tool { width: 21px; }
  .hud .drop { color: #888; }
  .hud .annot { width: 20px; }
  .docwin { display: flex; margin-left: auto; color: #8a8a8a; }

  .body { display: flex; flex: 1; min-height: 0; }
  .panel { display: flex; flex-direction: column; flex: none; width: 209px; padding-top: 3px; background: #f7f7f7; border-right: 2px solid #bdbdbd; }
  .mgr { display: flex; flex: none; height: 22px; margin-right: 2px; border-bottom: 1px solid #999; }
  .mgr button { display: flex; align-items: center; justify-content: center; width: 32px; background: #cfcfcf; border: 1px solid #999; border-width: 1px 1px 0 0; }
  .mgr .current { width: 29px; background: #f7f7f7; border-top: 0; }
  .mgr .more { width: 12px; margin-left: auto; background: none; border: 0; }
  .splitter { display: flex; align-items: center; justify-content: center; flex: none; height: 14px; margin: 3px 5px 2px 0; border: 1px solid #ccc; border-width: 1px 0; }
  i { display: block; width: 5px; height: 5px; border: 1px solid #999; border-radius: 50%; background: #ddd; }
  .filter { display: flex; align-items: center; gap: 1px; flex: none; height: 20px; margin-right: 2px; border: 1px solid #c2c2c2; border-left: 0; }
  .treebox { display: flex; flex: 1; min-height: 0; }
  .tree { display: grid; grid-auto-rows: 1fr; flex: 1; min-width: 0; margin: 0; padding: 0; list-style: none; overflow: hidden; }
  .tree li { display: flex; align-items: center; min-width: 0; min-height: 0; overflow: hidden; white-space: pre; }
  .tree .icon { width: 16px; height: 16px; margin-right: 3px; }
  .tw { flex: none; width: 16px; padding-left: 2px; }
  .l0 .tw { width: 0; padding: 0; }
  .tree .l0 .icon { margin-left: -1px; margin-right: 2px; }
  .l2 { padding-left: 18px; }
  .twist { width: 6px; height: 6px; }
  .twist.down { transform: rotate(90deg); }
  .label { line-height: 16px; }
  .vbar { display: flex; flex-direction: column; align-items: center; gap: 3px; flex: none; width: 12px; padding: 3px 0; background: #efefef; }
  .vbar .track { flex: 1; width: 11px; }
  .vbar .thumb { height: 53%; background: #c9c9c9; }
  .hbar { display: flex; align-items: center; flex: none; height: 13px; padding-right: 14px; background: #efefef; }
  .hbar .track { flex: 1; height: 12px; padding-left: 2px; }
  .hbar .thumb { width: 74%; height: 12px; background: #c9c9c9; }

  .view { position: relative; flex: 1; min-width: 0; }
  .scene { width: 100%; height: 100%; }
  .handle { position: absolute; left: -2px; top: 46%; display: flex; align-items: center; justify-content: center; width: 8px; height: 30px; background: #f7f7f7; border: 1px solid #aaa; border-left: 0; }
  .mf { font: italic bold 27px "DejaVu Sans", sans-serif; }
  .cn { font: bold 28px "Noto Sans CJK SC", sans-serif; }
  .url { font: bold 12px "DejaVu Sans", sans-serif; }
  .mark { opacity: .95; }
  .axes { font: bold 9px "Liberation Serif", serif; }
  .pane { position: absolute; right: 0; top: 23px; width: 14px; border: 1px solid #999; border-right: 0; overflow: hidden; }
  .pane button { display: flex; align-items: center; width: 20px; height: 19px; padding-left: 2px; background: #cdcdcd; border-bottom: 1px solid #999; }
  .pane .current { background: #fff; }

  .sheets { display: flex; flex: none; height: 14px; border-top: 1px solid #bbb; border-bottom: 1px solid #aaa; background: #f7f7f7; line-height: 11px; }
  .nav { display: flex; width: 50px; background: #a5a5a5; }
  .nav button { flex: 1; color: #858585; border-right: 1px solid #bbb; line-height: 11px; }
  .sheet { width: 47px; background: #d6d6d6; border-right: 1px solid #999; line-height: 11px; }
  .sheet.current { width: 38px; background: #f7f7f7; }
  .sheet:last-child { width: 68px; }
  .status { display: flex; align-items: center; flex: none; height: 14px; background: #e5e5e5; padding-right: 10px; }
  .product { flex: 1; margin-left: -2px; white-space: nowrap; }
  .cell { padding: 0 6px; border-right: 1px solid #d2d2d2; white-space: nowrap; }
  .cell.blank { width: 12px; padding: 0; height: 14px; }
  .units { display: flex; align-items: center; gap: 11px; width: 122px; padding-left: 22px; }
  .tagbtn .icon { width: 14px; height: 14px; }
</style>
